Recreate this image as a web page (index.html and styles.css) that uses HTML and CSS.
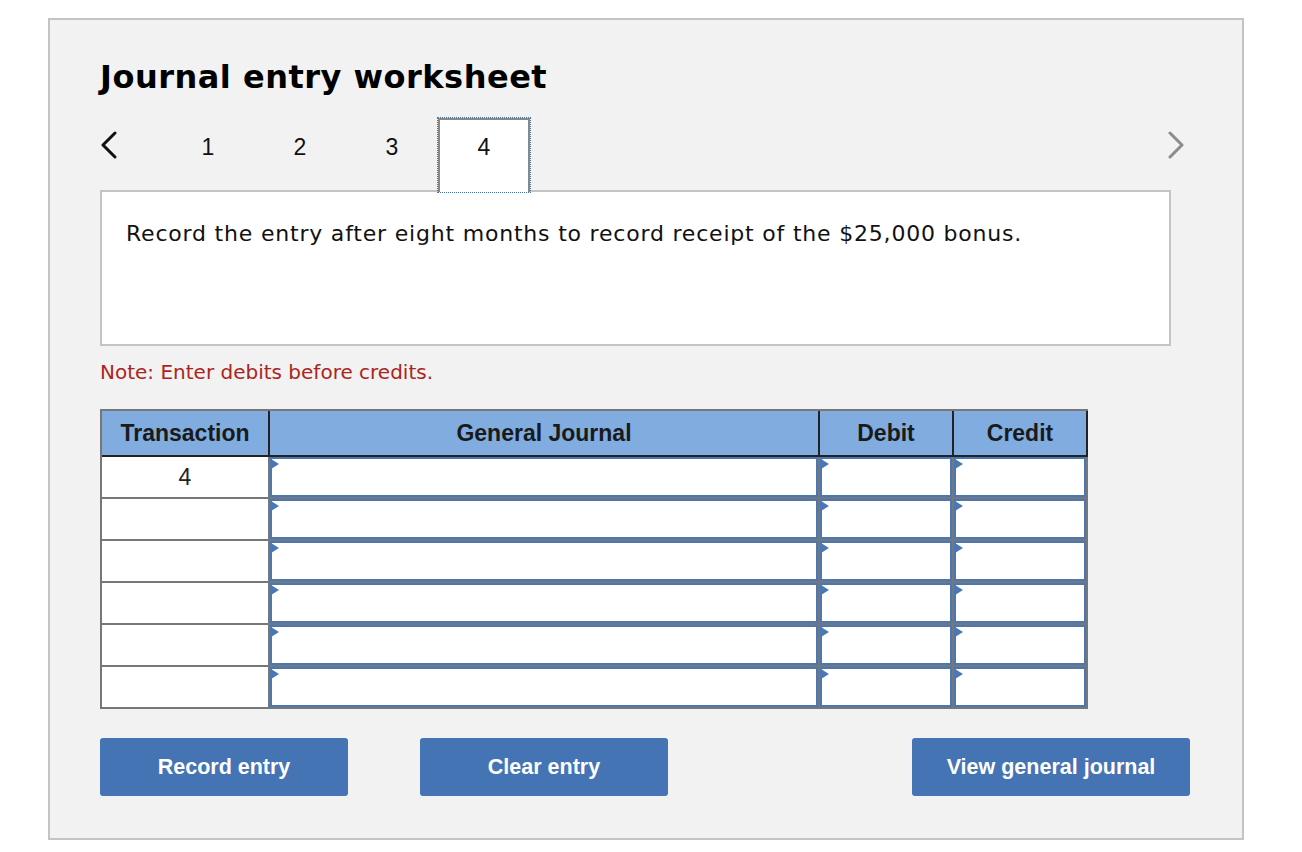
FILE: index.html
```html
<!DOCTYPE html>
<html lang="en">

<head>
    <meta charset="UTF-8">
    <meta name="viewport" content="width=device-width, initial-scale=1.0">
    <title>Journal entry worksheet</title>
    <link rel="stylesheet" href="styles.css">
</head>

<body>
    <div class="worksheet">
        <h1>Journal entry worksheet</h1>

        <!-- Step tabs -->
        <div class="steps">
            <span class="arrow prev">
                <svg width="18" height="28" viewBox="0 0 18 28"><polyline points="15,2 3,14 15,26" fill="none" stroke="#111" stroke-width="3" stroke-linecap="round" stroke-linejoin="round"/></svg>
            </span>
            <span class="step">1</span>
            <span class="step">2</span>
            <span class="step">3</span>
            <span class="step active">4</span>
            <span class="arrow next">
                <svg width="18" height="28" viewBox="0 0 18 28"><polyline points="3,2 15,14 3,26" fill="none" stroke="#8c8c8c" stroke-width="3" stroke-linecap="round" stroke-linejoin="round"/></svg>
            </span>
        </div>

        <div class="question">
            Record the entry after eight months to record receipt of the $25,000 bonus.
        </div>

        <p class="note">Note: Enter debits before credits.</p>

        <!-- Entry table -->
        <table class="journal">
            <thead>
                <tr>
                    <th class="col-trans">Transaction</th>
                    <th class="col-gj">General Journal</th>
                    <th class="col-amt">Debit</th>
                    <th class="col-amt">Credit</th>
                </tr>
            </thead>
            <tbody id="rows"></tbody>
        </table>

        <div class="actions">
            <button class="btn">Record entry</button>
            <button class="btn">Clear entry</button>
            <button class="btn wide">View general journal</button>
        </div>
    </div>

    <script>
        // build the six entry rows
        let rows = document.getElementById('rows');
        for (let i = 0; i < 6; i++) {
            let tr = document.createElement('tr');
            let trans = i === 0 ? '4' : '';
            tr.innerHTML = `<td class="trans">${trans}</td>
                <td class="cell"><div class="field"></div></td>
                <td class="cell"><div class="field"></div></td>
                <td class="cell"><div class="field"></div></td>`;
            rows.appendChild(tr);
        }
    </script>
</body>

</html>
```

FILE: styles.css
```css
body {
    margin: 0;
    background-color: #fff;
    font-family: "Liberation Sans", Arial, sans-serif;
}

.worksheet {
    box-sizing: border-box;
    width: 1196px;
    height: 822px;
    margin: 18px 0 0 48px;
    padding: 39px 71px 0 50px;
    background-color: #f2f2f2;
    border: 2px solid #c4c4c4;
}

h1 {
    margin: 0;
    font-family: "DejaVu Sans", Verdana, sans-serif;
    font-size: 32px;
    line-height: 36px;
    letter-spacing: 0.5px;
    font-weight: bold;
    color: #000;
}

.steps {
    display: flex;
    width: 1090px;
    height: 72px;
    margin-top: 23px;
}

.arrow {
    display: flex;
    padding-top: 13px;
}

.prev {
    width: 62px;
}

.next {
    margin-left: auto;
    margin-right: 5px;
}

.step {
    box-sizing: border-box;
    width: 92px;
    height: 74px;
    padding-top: 16px;
    text-align: center;
    font-size: 23px;
    line-height: 23px;
    color: #111;
    border: 2px solid transparent;
    border-bottom: none;
}

.step.active {
    position: relative;
    z-index: 1;
    background-color: #fff;
    border-color: #888;
    outline: 1px dotted #3e72b9;
}

.question {
    box-sizing: border-box;
    height: 156px;
    padding: 29px 24px;
    background-color: #fff;
    border: 2px solid #c4c4c4;
    font-family: "DejaVu Sans", Verdana, sans-serif;
    font-size: 22px;
    line-height: 26px;
    letter-spacing: 0.8px;
    color: #111;
}

.note {
    margin: 14px 0 0;
    font-family: "DejaVu Sans", Verdana, sans-serif;
    font-size: 20px;
    line-height: 24px;
    color: #ab2520;
}

.journal {
    margin-top: 25px;
    border-collapse: separate;
    border-spacing: 0;
    border-top: 2px solid #777;
    border-left: 2px solid #777;
    table-layout: fixed;
    width: 988px;
}

.journal th {
    box-sizing: border-box;
    height: 46px;
    padding: 0;
    background-color: #80acdf;
    border-right: 2px solid #222;
    border-bottom: 2px solid #222;
    font-size: 23px;
    font-weight: bold;
    color: #1a1a1a;
}

.col-trans {
    width: 168px;
}

.col-gj {
    width: 550px;
}

.col-amt {
    width: 134px;
}

.journal td {
    box-sizing: border-box;
    height: 42px;
    padding: 0;
    border-right: 2px solid #777;
    border-bottom: 2px solid #777;
}

.journal td.trans {
    background-color: #fff;
    text-align: center;
    font-size: 23px;
    color: #222;
}

.field {
    position: relative;
    box-sizing: border-box;
    height: 40px;
    background-color: #fff;
    border: 2px solid #4a77b6;
}

/* little marker at top left of each input */
.field::before {
    content: "";
    position: absolute;
    left: -1px;
    top: 0;
    border-top: 5px solid transparent;
    border-bottom: 5px solid transparent;
    border-left: 8px solid #4a77b6;
}

.actions {
    display: flex;
    gap: 72px;
    width: 1090px;
    margin-top: 29px;
}

.btn {
    width: 248px;
    height: 58px;
    padding: 0;
    border: none;
    border-radius: 3px;
    background-color: #4574b5;
    color: #fff;
    font-family: "Liberation Sans", Arial, sans-serif;
    font-size: 21.5px;
    font-weight: bold;
    cursor: pointer;
}

.btn.wide {
    width: 278px;
    margin-left: auto;
}
```
